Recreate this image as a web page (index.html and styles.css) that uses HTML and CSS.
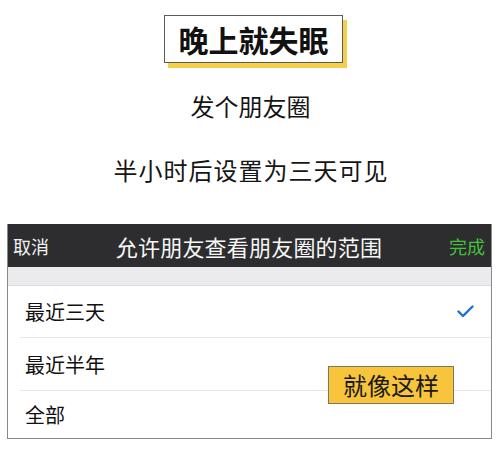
FILE: index.html
```html
<!DOCTYPE html>
<html lang="zh">
<head>
<meta charset="utf-8">
<link rel="stylesheet" href="styles.css">
</head>
<body>
<div class="page">
  <div class="title-box">晚上就失眠</div>
  <p class="line line-1">发个朋友圈</p>
  <p class="line line-2">半小时后设置为三天可见</p>
  <div class="panel">
    <div class="header">
      <span class="cancel">取消</span>
      <span class="heading">允许朋友查看朋友圈的范围</span>
      <span class="done">完成</span>
    </div>
    <div class="band"></div>
    <div class="row row-1"><span>最近三天</span>
      <svg class="check" width="17" height="13" viewBox="0 0 17 13"><path d="M1.5 6.5 L6 11 L15.5 1.5" fill="none" stroke="#1d6fd3" stroke-width="2.4" stroke-linecap="round" stroke-linejoin="round"/></svg>
    </div>
    <div class="row row-2"><span>最近半年</span></div>
    <div class="row row-3"><span>全部</span></div>
    <div class="badge">就像这样</div>
  </div>
</div>
</body>
</html>
```
FILE: styles.css
```css
html, body {
  margin: 0;
  padding: 0;
  background: #ffffff;
}
body {
  font-family: "Noto Sans CJK SC", "Noto Sans", sans-serif;
  color: #111;
}
.page {
  width: 499px;
  height: 460px;
  display: flex;
  flex-direction: column;
  align-items: center;
  overflow: hidden;
}
.title-box {
  margin-top: 15px;
  width: 177px;
  height: 46px;
  border: 1px solid #5a5a5a;
  box-shadow: 4px 5px 0 #f6cf48;
  font-size: 30px;
  font-weight: 700;
  line-height: 46px;
  text-align: center;
  color: #111;
  margin-left: 8px;
}
.line {
  margin: 0;
  font-size: 24px;
  line-height: 30px;
  text-align: center;
  color: #151515;
}
.line-1 {
  margin-top: 28px;
  margin-left: 2px;
}
.line-2 {
  margin-top: 34px;
  margin-left: 3px;
  font-size: 24px;
  letter-spacing: 1px;
}
.panel {
  position: relative;
  margin-top: 39px;
  align-self: flex-start;
  margin-left: 7px;
  width: 483px;
  border: 1px solid #8a8a8a;
  border-top: none;
  background: #fff;
}
.header {
  height: 43px;
  background: #2d2d2f;
  display: grid;
  grid-template-columns: 1fr auto 1fr;
  align-items: center;
  padding: 0 6px 0 5px;
}
.cancel {
  font-size: 18px;
  color: #f2f2f2;
  justify-self: start;
}
.heading {
  font-size: 22px;
  letter-spacing: 0.2px;
  color: #f7f7f7;
}
.done {
  font-size: 18px;
  color: #45c23c;
  justify-self: end;
}
.band {
  height: 18px;
  background: #ebebee;
  border-bottom: 1px solid #dcdcdf;
}
.row {
  margin-left: 12px;
  padding: 0 17px 0 5px;
  display: flex;
  align-items: center;
  justify-content: space-between;
  font-size: 20px;
  color: #111;
  border-bottom: 1px solid #e6e6e6;
}
.row-1 { height: 51px; }
.row-2 { height: 52px; }
.row-3 { height: 47px; border-bottom: none; }
.check {
  display: block;
}
.badge {
  position: absolute;
  left: 320px;
  top: 142px;
  width: 124px;
  height: 36px;
  border: 1px solid #7f7660;
  background: #f7c43c;
  font-size: 24px;
  line-height: 36px;
  text-align: center;
  color: #1a1a1a;
}
```
